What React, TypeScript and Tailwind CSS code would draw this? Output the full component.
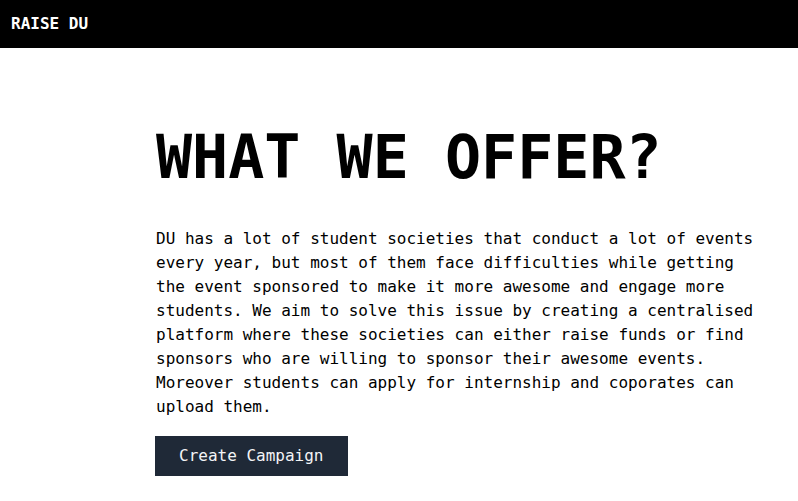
export default function App() {
  return (
    <div className="min-h-screen bg-white text-black font-['DejaVu_Sans_Mono',monospace]">
      {/* Navbar */}
      <nav className="h-12 bg-black flex items-center pl-[11px]">
        <span className="text-white text-base font-semibold">RAISE DU</span>
      </nav>

      {/* What we offer */}
      <main className="pl-[156px] pt-[79px]">
        <h1 className="text-6xl font-bold leading-[60px] mb-10">WHAT WE OFFER?</h1>
        <p className="w-[600px] text-base leading-6">
          DU has a lot of student societies that conduct a lot of events every year, but most of
          them face difficulties while getting the event sponsored to make it more awesome and
          engage more students. We aim to solve this issue by creating a centralised platform
          where these societies can either raise funds or find sponsors who are willing to sponsor
          their awesome events. Moreover students can apply for internship and coporates can
          upload them.
        </p>
        <button className="mt-[17px] -ml-px bg-[#1f2937] text-gray-100 px-6 py-2 text-base leading-6">
          Create Campaign
        </button>
      </main>
    </div>
  )
}
